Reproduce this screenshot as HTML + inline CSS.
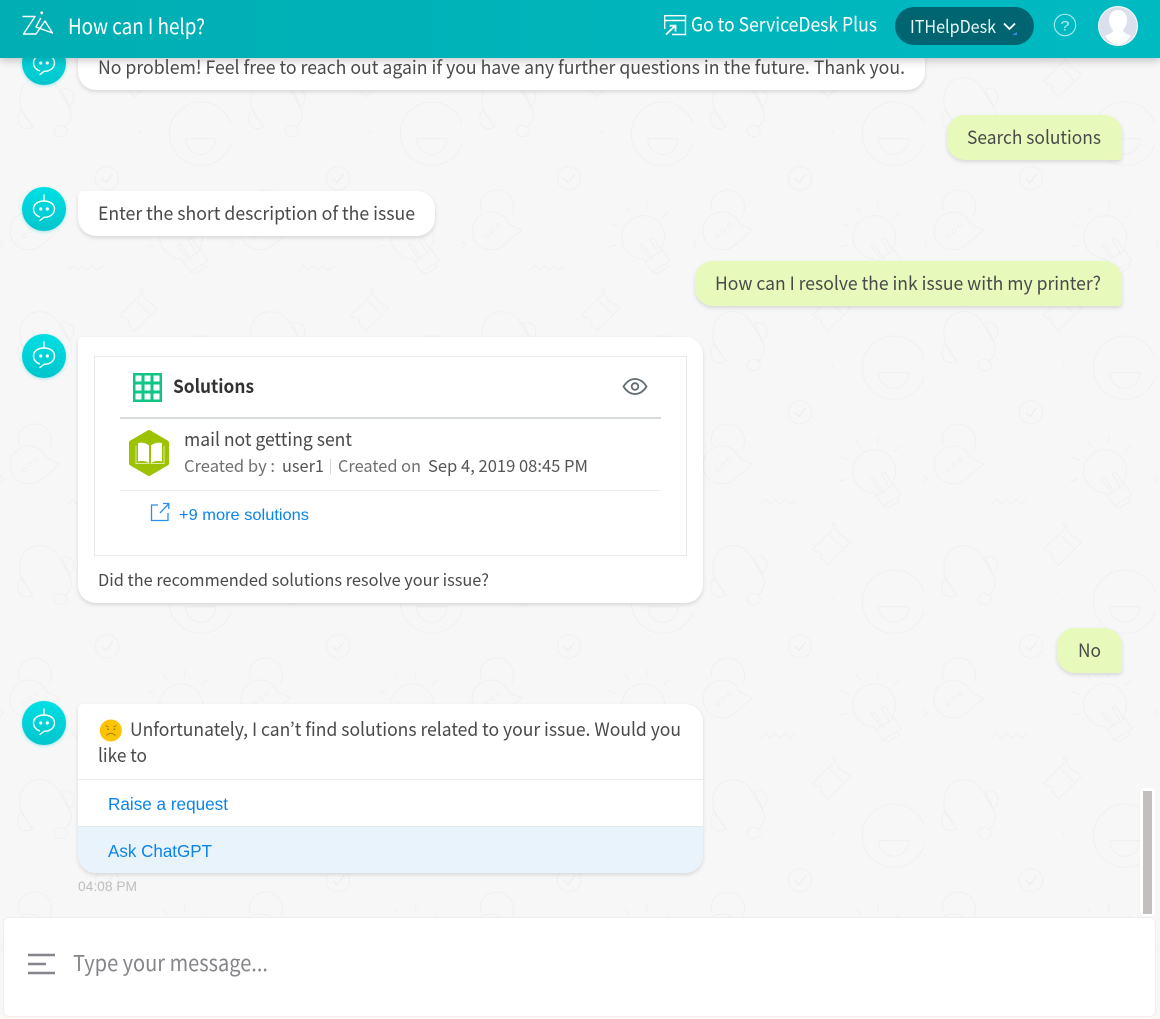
<!DOCTYPE html>
<html lang="en"><head><meta charset="utf-8"><title>How can I help?</title>
<style>
html,body{margin:0;padding:0;width:1160px;height:1019px;overflow:hidden;background:#f7f7f7}
.a{position:absolute;box-sizing:border-box}
#bg,#fg{position:absolute;left:0;top:0}
.b{background:#fff;border-radius:5px 18px 18px 18px;box-shadow:0 2px 4px rgba(0,0,0,.13)}
.u{background:#e8fabb;border-radius:18px 18px 4px 18px;box-shadow:0 2px 4px rgba(0,0,0,.13)}
#fg text{font-family:"Noto Sans CJK JP","Liberation Sans",sans-serif;fill:#4a4a4a}
#fg text.r{font-family:"Liberation Sans",sans-serif}
</style></head><body>
<svg id="bg" width="1160" height="1019" xmlns="http://www.w3.org/2000/svg"><defs>
<linearGradient id="g" x1="0" y1="0" x2="0" y2="1"><stop offset="0" stop-color="#00dfe5"/><stop offset="1" stop-color="#00c5cc"/></linearGradient>
<filter id="s" x="-30%" y="-30%" width="160%" height="160%"><feDropShadow dx="0" dy="1" stdDeviation="1.5" flood-color="#00c5cc" flood-opacity=".35"/></filter>
<g id="bot"><circle r="22" fill="url(#g)" filter="url(#s)"/>
<g fill="none" stroke="#fff" stroke-width="1.4" stroke-linecap="round"><path d="M0 -14V-8"/><path d="M-4 11.5L0 8.3C6 8.3 10.5 5 10.5 0C10.5 -5 6 -8 0 -8C-6 -8 -10.5 -5 -10.5 0C-10.5 4 -7.5 7 -4.5 7.8"/></g>
<circle cx="-3.3" cy="0" r="1.6" fill="#fff"/><circle cx="3.3" cy="0" r="1.6" fill="#fff"/></g>
<g id="art" fill="none" stroke="#f0f0f0" stroke-width="3" stroke-linejoin="round" stroke-linecap="round">
<circle cx="582" cy="203" r="95"/><path d="M536 218H627C627 245 605 265 582 265C558 265 536 245 536 218Z"/>
<path d="M78 185L42 128C30 80 50 35 100 35C125 35 145 50 155 70L190 130C198 150 190 172 172 184"/>
<path d="M42 133C25 150 30 190 60 188L78 184Z"/><path d="M162 70C180 60 205 75 200 100C198 110 195 115 187 121Z"/><ellipse cx="161" cy="195" rx="20" ry="17"/>
<path d="M405 682L416 698C414 710 430 704 432 712L452 727L383 795L362 772C372 760 355 752 350 758L338 747Z"/><path d="M392 708L430 745"/><circle cx="402" cy="673" r="5"/>
<path d="M522 578C490 578 458 550 458 513C458 478 490 449 522 449C558 449 587 478 587 513C587 525 583 536 578 545L603 585L550 617L522 578Z"/>
<path d="M530 586L578 555M548 618L566 623L598 603L592 596"/><path d="M540 575L512 538A8 8 0 0 1 524 537L552 580M572 568L544 523A7 7 0 0 1 556 518L580 558"/>
<path d="M470 422L480 439M535 408L532 430M598 439L582 455M424 472L445 481M419 543L440 538"/>
<path d="M158 492L120 475C105 440 68 430 40 445C5 462 0 510 25 535C50 558 85 555 105 537Z"/><circle cx="52" cy="509" r="6"/><circle cx="69" cy="494" r="6"/><circle cx="87" cy="479" r="6"/>
<path d="M37 434C25 395 55 372 84 372C120 372 145 410 128 448"/>
<circle cx="300" cy="337" r="35"/><path d="M285 338L297 350L317 324" stroke="#ececec"/>
<circle cx="398" cy="197" r="2" fill="#eee"/><circle cx="682" cy="337" r="2" fill="#eee"/>
<path d="M183 613L197 598L212 613L226 598L241 613L256 598L270 613L287 600"/>
<path d="M-21 525L-12 537L-21 550"/>
</g>
<pattern id="t" width="231" height="234" patternUnits="userSpaceOnUse">
<use href="#art" transform="translate(7 66) scale(.3333)"/><use href="#art" transform="translate(7 -168) scale(.3333)"/>
</pattern></defs>
<rect width="1160" height="1019" fill="#f7f7f7"/><rect width="1160" height="1019" fill="url(#t)"/>
<use href="#bot" x="44" y="63"/>
</svg>

<div class="a b" style="left:78px;top:30px;width:847px;height:60px"></div>
<div class="a u" style="left:947px;top:115px;width:175px;height:45px"></div>
<div class="a b" style="left:78px;top:191px;width:357px;height:45px"></div>
<div class="a u" style="left:695px;top:261px;width:427px;height:45px"></div>
<div class="a b" style="left:78px;top:337px;width:625px;height:266px"></div>
<div class="a" style="left:94px;top:356px;width:593px;height:200px;border:1px solid #e8e9ed"></div>
<div class="a" style="left:120px;top:417px;width:541px;height:2px;background:#d8dbde"></div>
<div class="a" style="left:120px;top:490px;width:541px;height:1px;background:#eceded"></div>
<div class="a" style="left:330px;top:459px;width:1px;height:15px;background:#d5d5d5"></div>
<div class="a u" style="left:1057px;top:628px;width:65px;height:45px"></div>
<div class="a b" style="left:78px;top:704px;width:625px;height:169px;overflow:hidden">
  <div class="a" style="left:0;top:75px;width:625px;height:1px;background:#ececec"></div>
  <div class="a" style="left:0;top:122px;width:625px;height:47px;background:#e9f3fc;border-top:1px solid #e2e8ee"></div>
</div>
<div class="a" style="left:0;top:1016px;width:1160px;height:3px;background:#fdf8f0"></div>
<div class="a" style="left:4px;top:918px;width:1151px;height:98px;background:#fff;border-radius:5px;box-shadow:0 0 0 1px #eee"></div>
<div class="a" style="left:1140px;top:788px;width:15px;height:128px;background:#fff;border-radius:4px"></div>
<div class="a" style="left:1143px;top:791px;width:9px;height:123px;background:#c4bfbf"></div>
<div class="a" style="left:0;top:0;width:1160px;height:58px;background:linear-gradient(90deg,#00aeb3,#00bac2);box-shadow:0 3px 8px rgba(0,0,0,.2)"></div>
<div class="a" style="left:895px;top:7px;width:139px;height:38px;border-radius:19px;background:#006570"></div>

<svg id="fg" width="1160" height="1019" xmlns="http://www.w3.org/2000/svg">
<use href="#bot" x="44" y="209"/><use href="#bot" x="44" y="356"/><use href="#bot" x="44" y="723"/>

<!-- header -->
<path d="M23 16.500H35L23.500 34H36L45 21L52.500 33L36 27L40.500 18.500" fill="none" stroke="#fff" stroke-width="1.400" stroke-linejoin="round" stroke-linecap="round"/>
<circle cx="41.700" cy="12.800" r="1.400" fill="#fff"/>
<text x="68" y="34" font-size="21" textLength="137" lengthAdjust="spacingAndGlyphs" style="fill:#fff">How can I help?</text>
<g fill="none" stroke="#fff" stroke-width="1.400"><path d="M664.700 29V15.700H685.500V34.500H672M664.700 20.500H685.500"/><path d="M666 34.500L675 26M669.700 25.700H675.500V31.500" stroke-width="1.800"/></g>
<text x="691" y="31.500" font-size="19.500" textLength="186" lengthAdjust="spacingAndGlyphs" style="fill:#fff">Go to ServiceDesk Plus</text>
<text x="910" y="33" font-size="17.500" textLength="86" lengthAdjust="spacingAndGlyphs" style="fill:#eaf7f8">ITHelpDesk</text>
<path d="M1004 23.500L1009.500 29L1015 23.500" fill="none" stroke="#fff" stroke-width="1.800"/><path d="M1012 35L1017 32V35Z" fill="#3f86e8"/>
<circle cx="1065" cy="25" r="10.700" fill="none" stroke="#a6ecef" stroke-width="1.100"/>
<text class="r" x="1060.500" y="30.500" font-size="14" textLength="9" lengthAdjust="spacingAndGlyphs" style="fill:#b8f0f2">?</text>
<circle cx="1118" cy="26" r="20" fill="#fff"/>
<circle cx="1118" cy="26" r="19" fill="#dbe0ec"/>
<path d="M1118 10C1124 10 1127 15 1127 20C1127 24 1125 28 1123 30C1123 33 1127 34 1131 36C1128 41 1123 44.500 1118 44.500C1113 44.500 1108 41 1105 36C1109 34 1113 33 1113 30C1111 28 1109 24 1109 20C1109 15 1112 10 1118 10Z" fill="#fff"/>

<!-- messages -->
<text x="98" y="74" font-size="18.500" textLength="807" lengthAdjust="spacingAndGlyphs">No problem! Feel free to reach out again if you have any further questions in the future. Thank you.</text>
<text x="967" y="144" font-size="18.500" textLength="134" lengthAdjust="spacingAndGlyphs">Search solutions</text>
<text x="98" y="220" font-size="18.500" textLength="317" lengthAdjust="spacingAndGlyphs">Enter the short description of the issue</text>
<text x="715" y="290" font-size="18.500" textLength="386" lengthAdjust="spacingAndGlyphs">How can I resolve the ink issue with my printer?</text>

<!-- card -->
<rect x="133" y="373" width="29" height="29" fill="#0fc684"/>
<g fill="#fff"><rect x="135.500" y="375.500" width="6" height="6"/><rect x="144.500" y="375.500" width="6" height="6"/><rect x="153.500" y="375.500" width="6" height="6"/><rect x="135.500" y="384.500" width="6" height="6"/><rect x="144.500" y="384.500" width="6" height="6"/><rect x="153.500" y="384.500" width="6" height="6"/><rect x="135.500" y="393.500" width="6" height="6"/><rect x="144.500" y="393.500" width="6" height="6"/><rect x="153.500" y="393.500" width="6" height="6"/></g>
<text x="173" y="393" font-size="18.500" font-weight="700" textLength="81" lengthAdjust="spacingAndGlyphs" style="fill:#333">Solutions</text>
<g fill="none" stroke="#5f6b73" stroke-width="1.800"><path d="M623.500 386.500C627 381 631 379 635 379C639 379 643 381 646.500 386.500C643 392 639 394 635 394C631 394 627 392 623.500 386.500Z"/><circle cx="635" cy="386.500" r="3.300"/></g>
<polygon points="149,432 167,442.500 167,463.500 149,474 131,463.500 131,442.500" fill="#9cc200" stroke="#9cc200" stroke-width="4" stroke-linejoin="round"/>
<path d="M138 443C142 442 146 443 149 445.500V463C146 461 142 460.500 138 461.500Z M151 445.500C154 443 158 442 162 443V461.500C158 460.500 154 461 151 463Z" fill="#fff"/>
<path d="M136 446V463.500H149.500M164 446V463.500H150.500" fill="none" stroke="#dcebaa" stroke-width="1"/>
<text x="184" y="446" font-size="18.500" textLength="168" lengthAdjust="spacingAndGlyphs">mail not getting sent</text>
<text x="184" y="472" font-size="16.500" textLength="91" lengthAdjust="spacingAndGlyphs" style="fill:#707070">Created by :</text>
<text x="282" y="472" font-size="16.500" textLength="42" lengthAdjust="spacingAndGlyphs" style="fill:#555">user1</text>
<text x="338" y="472" font-size="16.500" textLength="83" lengthAdjust="spacingAndGlyphs" style="fill:#707070">Created on</text>
<text x="428" y="472" font-size="16.500" textLength="160" lengthAdjust="spacingAndGlyphs" style="fill:#555">Sep 4, 2019 08:45 PM</text>
<g fill="none" stroke="#2a8fee" stroke-width="1.300"><path d="M158 505H151.500V520.500H168V513"/><path d="M160 513L168.500 504M163 503.500H168.800V509"/></g>
<text class="r" x="179" y="520" font-size="16" textLength="130" lengthAdjust="spacingAndGlyphs" style="fill:#0a84ec">+9 more solutions</text>
<text x="98" y="586" font-size="16.500" textLength="391" lengthAdjust="spacingAndGlyphs">Did the recommended solutions resolve your issue?</text>

<text x="1078" y="657" font-size="18.500" textLength="23" lengthAdjust="spacingAndGlyphs">No</text>

<!-- reply -->
<circle cx="110.800" cy="730.500" r="11" fill="#fcc400"/>
<circle cx="108" cy="729.300" r=".9" fill="#9a7a10"/><circle cx="114.500" cy="729.300" r=".9" fill="#9a7a10"/>
<path d="M106.500 735.500Q111 731 115.500 735.500M105.500 725.500L108.500 727M116.500 725.500L113.500 727" fill="none" stroke="#9a7a10" stroke-width=".9"/>
<text x="130" y="736" font-size="18.500" textLength="551" lengthAdjust="spacingAndGlyphs">Unfortunately, I can’t find solutions related to your issue. Would you</text>
<text x="98" y="762" font-size="18.500" textLength="49" lengthAdjust="spacingAndGlyphs">like to</text>
<text class="r" x="108" y="810" font-size="17.500" textLength="120" lengthAdjust="spacingAndGlyphs" style="fill:#0a84ec">Raise a request</text>
<text class="r" x="108" y="857" font-size="17.500" textLength="104" lengthAdjust="spacingAndGlyphs" style="fill:#0a84ec">Ask ChatGPT</text>
<text class="r" x="78" y="891" font-size="13.500" textLength="59" lengthAdjust="spacingAndGlyphs" style="fill:#bdbdbd">04:08 PM</text>

<!-- input -->
<path d="M28 955H55M28 964H46M28 973H55" stroke="#85858f" stroke-width="2.500" fill="none"/>
<text x="73" y="971" font-size="22" textLength="195" lengthAdjust="spacingAndGlyphs" style="fill:#85858a">Type your message...</text>
</svg>
</body></html>
